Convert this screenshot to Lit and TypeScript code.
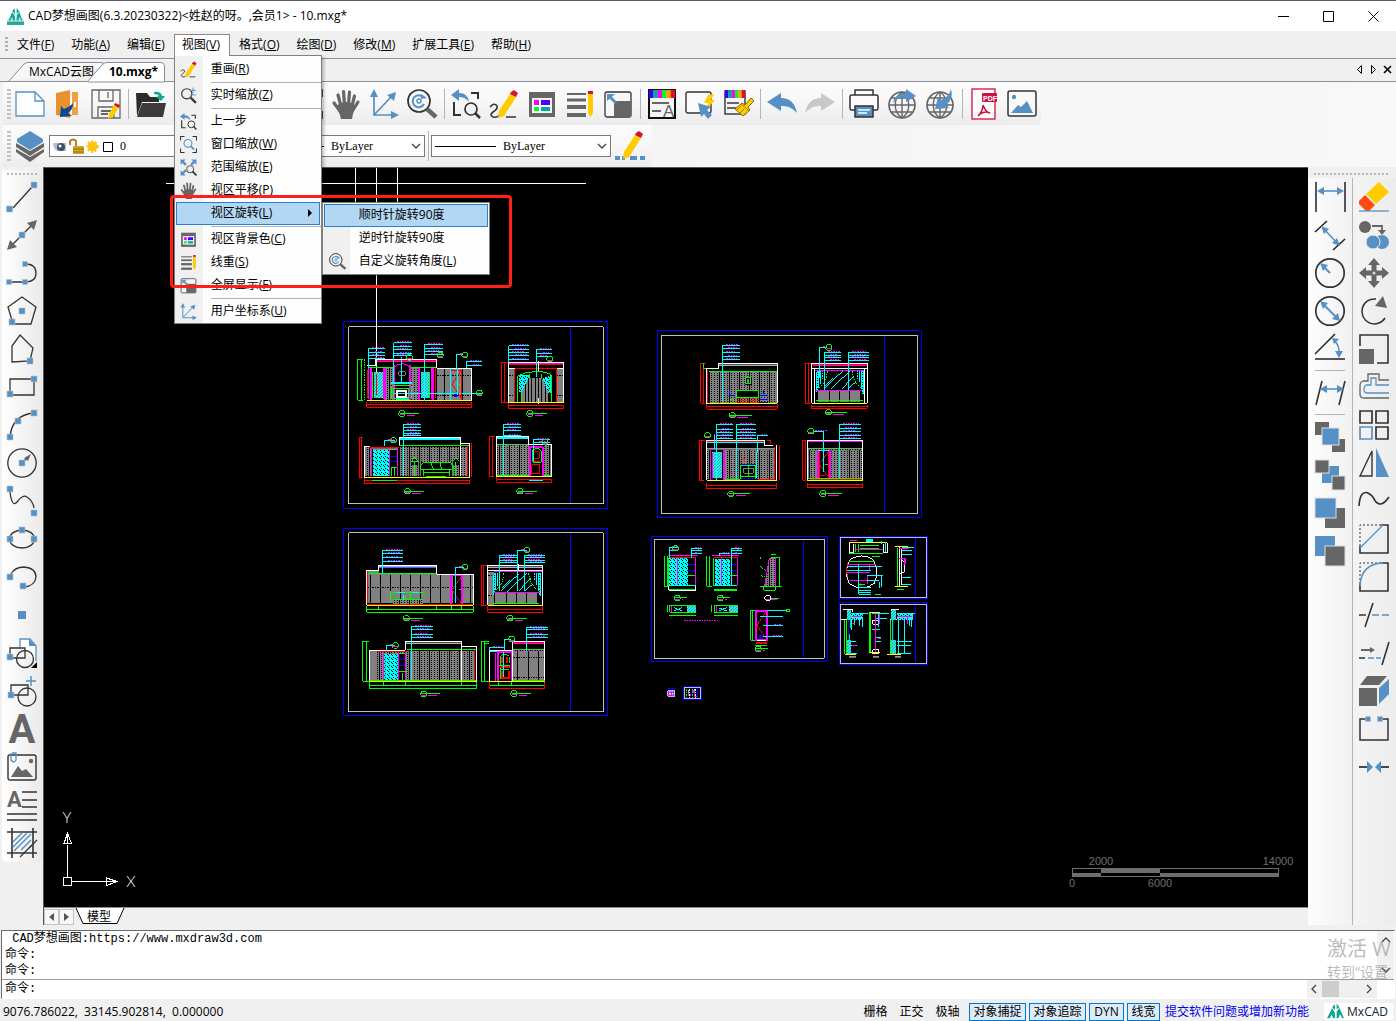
import { LitElement, html, svg, css } from "lit";
import { customElement } from "lit/decorators.js";

/* ---------- icons: every glyph lives on a 30 x 30 grid ---------- */

const B = "#5690c4";
const D = "#333333";
const G = "#666666";
const Y = "#ffcc00";

const ln = (d: string, c = D, w = 1.3) => svg`<path d=${d} fill="none" stroke=${c} stroke-width=${w}/>`;
const fl = (d: string, c = B) => svg`<path d=${d} fill=${c}/>`;
const dot = (x: number, y: number, s = 6) =>
  svg`<rect x=${x - s / 2} y=${y - s / 2} width=${s} height=${s} fill=${B} stroke="#b5c4d3" stroke-width="0.6"/>`;
const circ = (x: number, y: number, r: number, c = D, w = 1.3) =>
  svg`<circle cx=${x} cy=${y} r=${r} fill="none" stroke=${c} stroke-width=${w}/>`;
const rainbow = (w: number) =>
  ["#3a00ff", "#00a99d", "#ff00ff", "#00ff20", "#ff9900", "#d4142a"].map(
    (c, i) => svg`<rect x=${2 + (i * w) / 6} y="1" width=${w / 6 + 0.2} height="8" fill=${c}/>`
  );
const globe = svg`${circ(15, 16, 13, G, 1.7)}${ln("M15 3V29M2 16H28M4.500 9H25.500M4.500 23H25.500M15 3C6 9 6 23 15 29M15 3C24 9 24 23 15 29", G, 1.4)}`;
const pencil = svg`${fl("M21 5L27 8L15 27L9 29L10 22Z", Y)}${fl("M22 3L25 1L29 4L27 8L21 5Z", "#d4142a")}`;

const ICONS: Record<string, unknown> = {
  file: svg`<path d="M1 3H20L29 12V27H1Z" fill="#fbfdff" stroke=${B} stroke-width="1.300"/>${ln("M20 3V12H29", B)}`,
  open: svg`${fl("M3 4L17 1V29L3 26Z", "#e8912d")}${fl("M19 3H25V26H19Z", "#f0a045")}${ln("M22 13V18", "#ffffff", 2)}${fl("M7 28L8 17L11 20Q18 17 20 14Q20 21 15 24L19 27Z", "#0b4a92")}`,
  save: svg`${ln("M1 1H29V29H1Z", G)}${ln("M8 1V12H22V1M17 3V9M7 29V18H23V29", G)}${ln("M10 22H20M10 25H17", G, 1.8)}${fl("M23 16L28 18L22 28L17 30L18 25Z", Y)}${fl("M24 14L29 16L28 19L23 16Z", "#d4142a")}`,
  folder: svg`${fl("M1 4H12L15 8H24V13H7L2 27Z", "#2b2b2b")}${fl("M7 14H31L28 28H2Z", "#3b3b3b")}${fl("M19 3Q26 2 27 7L30 7L26 12L21 8L24 7Q23 5 19 5Z", "#16a596")}`,
  zoomrt: svg`${circ(12, 12, 9, D, 2)}${ln("M19 19L28 28", D, 4)}${ln("M18 6H28M23 1V11M18 14H28", B, 1.6)}`,
  zoomwin: svg`${ln("M1 8V1H8M22 1H29V8M29 22V29H22M8 29H1V22", D, 1.8)}${circ(14, 13, 7, B, 1.8)}${ln("M19 18L25 24", B, 3)}`,
  zoomext: svg`${fl("M1 1H10L7 4L12 9L9 12L4 7L1 10ZM29 1V10L26 7L21 12L18 9L23 4L20 1ZM1 29V20L4 23L9 18L12 21L7 26L10 29Z")}${circ(18, 18, 6, G, 2)}${ln("M22 22L29 29", D, 3)}`,
  hand: svg`<path d="M10 17L7 6M13.500 15L12.500 2.500M17.500 15L18.500 3M21 17L23.500 7M9 22L3 14M22 21L27 13" fill="none" stroke=${G} stroke-width="3.200" stroke-linecap="round"/>${fl("M8 15Q15 11 23 15L24 19L22 25L21 30H10L9 26L5 18Z", G)}`,
  axes: svg`${ln("M5 5V26H25M5 26L22 8", B, 1.7)}${fl("M5 0L9 8H1ZM30 26L22 22V30ZM27 3L25 12L18 6Z")}`,
  rotate: svg`${circ(12, 12, 11, D, 1.7)}${ln("M16 8A6 6 0 1 0 17 15", B, 2)}${circ(12, 12, 2, B, 1.5)}${ln("M20 20L29 28", G, 4.5)}${fl("M14 5L20 9L14 10Z")}`,
  prev: svg`${ln("M3 13V26H10M20 4H27V10", D, 2)}${circ(20, 20, 6, D, 1.7)}${ln("M24 24L29 29", D, 2.5)}${fl("M0 6L8 0V4Q17 4 18 13Q14 8 8 8V12Z")}`,
  redraw: svg`${ln("M1 18Q5 13 8 17Q9 20 4 23Q0 26 4 28Q8 29 11 26M17 28H27", D, 1.6)}${pencil}`,
  colors: svg`<rect x="2" y="3" width="26" height="25" fill=${G}/><rect x="5" y="9" width="20" height="15" fill="#f5f5f5"/><rect x="7" y="11" width="5" height="5" fill="#ff00ff"/><rect x="14" y="11" width="9" height="5" fill="#4b00ff"/><rect x="7" y="18" width="5" height="4" fill="#00ff20"/><rect x="14" y="18" width="9" height="4" fill="#00a99d"/>`,
  lines: svg`${ln("M2 5H21", G, 2)}${ln("M2 11H21", G, 3)}${ln("M2 18H21", G, 4)}${ln("M2 26H21", G, 4)}${fl("M23 5H28V24L25.500 28L23 24Z", Y)}${fl("M23 2H28V5H23Z", "#d4142a")}`,
  full: svg`<rect x="2" y="3" width="26" height="25" rx="2" fill="#f7f7f7" stroke=${D} stroke-width="1.300"/>${fl("M11 12H28V28H11Z", G)}${ln("M5 6L13 14", B, 3)}${fl("M4 5H12L4 12Z")}`,
  ltype: svg`<rect x="2" y="1" width="26" height="28" fill="#f5f5f5" stroke="#111" stroke-width="2"/>${rainbow(26)}${ln("M5 14H22M5 22H14", G, 2)}<text x="16" y="28" font-family="Liberation Sans" font-size="17" fill=${G}>A</text>`,
  select: svg`<rect x="1" y="3" width="25" height="21" rx="2" fill="#fafafa" stroke=${D} stroke-width="1.400"/>${fl("M23 6L29 5L26 11H30L21 21L23 14H19Z", Y)}${fl("M13 14L26 18L22 21L27 26L23 30L19 25L16 28Z")}`,
  brush: svg`<rect x="2" y="2" width="20" height="23" fill="#f5f5f5" stroke="#222" stroke-width="1.300"/>${rainbow(20)}${ln("M4 14H16M4 19H14", G, 1.8)}<path d="M28 9L31 12L25 18L27 21L20 27L12 20L19 14L22 16Z" fill=${Y} stroke="#8a6800"/>${ln("M18 15L26 22M14 21L18 17M17 24L21 20", "#8a6800", 0.8)}`,
  undo: svg`${fl("M0 13L14 4V9Q27 9 30 24Q23 16 14 17V22Z")}`,
  redo: svg`${fl("M30 13L16 4V9Q3 9 0 24Q7 16 16 17V22Z", "#c8c8c8")}`,
  print: svg`<rect x="6" y="1" width="18" height="6" fill="#fafafa" stroke=${D} stroke-width="1.500"/><rect x="1" y="6" width="28" height="15" rx="1.500" fill="#fafafa" stroke=${D} stroke-width="1.500"/><rect x="6" y="17" width="18" height="11" fill=${B} stroke=${D} stroke-width="1.500"/>${ln("M9 21H21M9 24H18", "#ffffff")}`,
  globeout: svg`${globe}${fl("M6 14Q8 4 19 4V0L29 7L19 13V9Q11 8 6 14Z")}`,
  globein: svg`${globe}${fl("M26 0Q29 10 21 16L24 19L10 20L13 8L16 11Q24 8 26 0Z")}`,
  pdf: svg`<rect x="3" y="0" width="23" height="30" fill="#fff" stroke="#d0103f" stroke-width="1.300"/><rect x="13" y="4" width="15" height="9" rx="1" fill="#d0103f"/><text x="14" y="11.500" font-family="Liberation Sans" font-weight="bold" font-size="7" fill="#fff">PDF</text>${ln("M9 27Q14 22 14 16Q17 24 21 24Q15 21 9 27", "#d0103f", 1.5)}`,
  image: svg`<rect x="1" y="2" width="28" height="25" rx="2" fill="#f8f8f8" stroke=${D} stroke-width="1.500"/>${fl("M4 24L11 16L14 18L20 12L26 24Z")}<circle cx="7" cy="8" r="2.200" fill=${B}/>`,
  layers: svg`${fl("M15 20L1 12V16L15 25L29 16V12Z", G)}${fl("M15 26L1 18V21L15 31L29 21V18Z", G)}${fl("M15 0L28 8V11L15 19L2 11V8Z")}`,
  edit: svg`${fl("M0 25H5V29H0ZM7 25H10V29H7ZM15 25H22V29H15ZM25 25H30V29H25Z")}<g transform="translate(-1 -1)">${pencil}</g>`,

  line: svg`${ln("M6 26L25 5")}${dot(2.500, 27)}${dot(27, 3)}`,
  xline: svg`${ln("M6 24L24 6")}${fl("M30 0L27 10L20 3ZM0 30L3 20L10 27Z", G)}${dot(15, 15)}`,
  pline: svg`${ln("M3 24H18Q29 24 29 15Q29 6 18 6")}${dot(2, 24, 5)}${dot(18, 24, 5)}${dot(18, 6, 5)}`,
  polygon: svg`${ln("M15 1L29 11L24 28H6L1 11Z")}${dot(15, 15)}${dot(5, 26)}`,
  poly: svg`${ln("M13 1L26 14L23 27L5 28V12Z")}${dot(23, 27)}`,
  rect: svg`${ln("M3 7H27V23H3Z")}${dot(27, 7)}${dot(3, 22)}`,
  arc: svg`${ln("M3 27Q5 5 27 3", D, 1.4)}${dot(3, 27)}${dot(11, 11)}${dot(27, 3)}`,
  circle: svg`${circ(15, 15, 14.200)}${ln("M15 15L21 9")}${fl("M24 6L21 13L17 10Z", G)}${dot(15, 15)}`,
  spline: svg`${ln("M3 6Q5 22 10 16Q16 8 20 11Q26 15 27 22")}${dot(3, 3)}${dot(27, 27)}`,
  ellipse: svg`<ellipse cx="15" cy="15" rx="12.500" ry="9" fill="none" stroke=${D} stroke-width="1.300"/>${dot(15, 6)}${dot(3, 15)}${dot(27, 15)}`,
  earc: svg`${ln("M4 12Q8 5 17 5Q29 6 29 15Q28 24 17 25")}${dot(3, 15)}${dot(16, 24)}`,
  point: svg`<rect x="11" y="11" width="8" height="8" fill=${B}/>`,
  block: svg`<path d="M13 9V1H23L29 8V23" fill="#fff" stroke=${B} stroke-width="1.300"/>${fl("M22 1L29 8H22Z")}${ln("M3 10H18V20H3Z")}${circ(18, 21, 8.500)}${dot(3, 19)}${fl("M30 24V30H24Z", "#000")}`,
  blockadd: svg`${ln("M4 9H21V19H4Z")}${circ(20, 21, 9)}${ln("M24 0V10M19 5H29", B, 1.5)}${dot(4, 19)}`,
  text: svg`<text x="15" y="29" text-anchor="middle" font-family="Roboto, sans-serif" font-weight="bold" font-size="40" fill=${G}>A</text>`,
  picture: svg`<rect x="1" y="3" width="28" height="25" rx="2" fill="none" stroke=${D} stroke-width="1.400"/>${fl("M4 25L11 14L15 19L19 17L26 25Z", G)}<circle cx="24" cy="9" r="2.200" fill=${G}/>${ln("M4 1V8Q7 12 9 8V1H5", B)}`,
  mtext: svg`<text x="0" y="17" font-family="Roboto, sans-serif" font-weight="bold" font-size="22" fill=${G}>A</text>${ln("M15 2H30M15 10H30M15 17H30M0 24H30M0 30H30", D, 1.5)}`,
  hatch: svg`${ln("M5 0V30M26 0V30M0 4H30M0 25H30", D, 1.6)}${ln("M6 14L15 5M6 19L20 5M7 23L24 6M14 22L24 12M22 20L25 17", B, 1.5)}${ln("M13 29L30 12")}`,

  dimlin: svg`${ln("M1 0V30M30 0V30", "#222", 1.5)}${ln("M5 9H25", B, 1.6)}${fl("M2 9L9 5V13ZM29 9L22 5V13Z")}`,
  dimal: svg`${ln("M0 12L12 1M18 30L30 19", "#222", 1.5)}${ln("M9 9L22 23", B, 1.6)}${fl("M6 6L14 9L9 14ZM25 26L17 23L22 18Z")}`,
  dimrad: svg`${circ(15, 15, 14.200, D, 1.7)}${ln("M8 8L15 15", B, 2)}${fl("M5 5L13 7L8 13Z")}`,
  dimdia: svg`${circ(15, 15, 14.200, D, 1.7)}${ln("M8 8L22 22", B, 2)}${fl("M5 5L13 7L8 13ZM25 25L17 23L23 17Z")}`,
  dimang: svg`${ln("M0 20L20 0M0 25H30", "#222", 1.5)}${ln("M19 6Q25 12 24 20", B, 1.5)}${fl("M17 4L24 5L19 10ZM24 24L20 17L28 17Z")}`,
  dimcont: svg`${ln("M1 27L7 3M24 27L30 3", D, 1.6)}${ln("M8 11H26", B, 1.6)}${fl("M5 11L12 7V15ZM29 11L22 7V15Z")}`,
  front: svg`${fl("M0 0H14V13H0ZM17 17H30V30H17Z", G)}<rect x="7" y="6" width="17" height="17" fill=${B} stroke="#ddd"/>`,
  back: svg`${fl("M7 6H24V23H7Z")}<rect x="0" y="0" width="14" height="13" fill=${G} stroke="#ddd"/><rect x="17" y="16" width="13" height="14" fill=${G} stroke="#ddd"/>`,
  above: svg`${fl("M10 10H30V30H10Z", G)}<rect x="0" y="0" width="21" height="20" fill=${B} stroke="#ddd"/>`,
  below: svg`${fl("M0 0H20V20H0Z")}<rect x="10" y="10" width="20" height="20" fill=${G} stroke="#ddd"/>`,

  erase: svg`${fl("M20 0L30 10L17 22L7 12Z", Y)}${fl("M6 13L16 23L10 29H7L0 22V19Z", "#ff4a10")}${ln("M0 29H30", B)}`,
  copy: svg`<circle cx="6" cy="7" r="6" fill=${G}/>${ln("M13 6H23V11", G, 1.8)}${fl("M19 10H27L23 15Z", G)}<circle cx="23" cy="22" r="7" fill=${B}/><circle cx="14" cy="22" r="7" fill=${B} stroke="#eee"/>`,
  move: svg`${ln("M15 5V25M5 15H25", G, 5)}${fl("M15 0L21 7H9ZM15 30L21 23H9ZM0 15L7 9V21ZM30 15L23 9V21Z", G)}<circle cx="15" cy="15" r="1.500" fill="#ddd"/>`,
  rot: svg`${ln("M17 3A12.500 12.500 0 1 0 26 22", D, 1.5)}${fl("M24 0L28 12L16 10Z", G)}`,
  scale: svg`${ln("M1 12V1H29V29H18", D, 1.6)}${fl("M0 15H15V30H0Z", G)}`,
  offset: svg`${ln("M30 8H20V2H9V9H4Q1 10 1 14V22Q1 26 5 26H30", G)}${ln("M30 13H17V6H12V13H7Q5 14 5 17Q5 21 8 21H30", B)}`,
  array: svg`${ln("M1 1H13V13H1ZM17 1H29V13H17ZM17 17H29V29H17Z", D, 1.7)}${ln("M1 17H13V29H1Z", B, 1.7)}`,
  mirror: svg`${ln("M13 3V28H1Z", D, 1.4)}${fl("M17 0V29H30Z")}`,
  curve: svg`${ln("M0 20Q1 4 9 7Q14 10 15 13Q21 24 30 11", D, 1.6)}`,
  chamfer: svg`<path d="M1 22V1H22" fill="none" stroke=${D} stroke-dasharray="2 2"/>${ln("M22 1H29V29H1V22", D, 1.6)}${ln("M1 24L24 1", B)}`,
  fillet: svg`<path d="M1 22V1H22" fill="none" stroke=${D} stroke-dasharray="2 2"/>${ln("M22 1H29V29H1V22", D, 1.6)}${ln("M1 24Q2 2 24 1", B, 1.6)}`,
  trim: svg`${ln("M0 15H7M6 27L14 3", D, 1.6)}${ln("M13 15H20M23 15H30", B, 1.6)}`,
  extend: svg`${ln("M0 20H6M23 27L30 4", D, 1.6)}${ln("M9 20H15M17 20H22", B, 1.6)}${ln("M2 12H12", G, 2)}${fl("M16 12L11 9V15Z", G)}`,
  solid: svg`${fl("M8 0H28L20 9H1ZM0 12H18V30H0Z", G)}${fl("M20 12L30 3V18L20 28Z")}`,
  brk: svg`${ln("M8 5H1V26H29V5H22", D, 1.5)}${dot(9, 5, 5)}${dot(21, 5, 5)}`,
  join: svg`${ln("M0 15H10M20 15H30", "#111", 1.6)}${fl("M8 9L14 15L8 21ZM22 9L16 15L22 21Z")}`,
  logo: svg`${fl("M0 27L9 9L14 17V27H11L8 20L5 27ZM30 27L22 9L17 15V27H20L23 20L27 27ZM9 7L14 2V13ZM22 8L17 1V11Z", "#12a596")}`,
  app: svg`${fl("M2 18H28L30 24V30H0V24Z", "#bfe3df")}${fl("M0 24H30V30H0Z", "#2aa79b")}${fl("M3 22L9 7L14 14V22H11L9 16L6 22ZM27 22L22 7L17 13V22H20L22 16L25 22ZM9 5L14 1V11ZM22 6L17 0V10Z", "#12a596")}`,
};

const icon = (name: string, size = "i30") =>
  html`<svg class=${size} viewBox="0 0 30 30" aria-hidden="true">${ICONS[name]}</svg>`;

/* ---------- drawing sheets: each unit is a third of a screen pixel ---------- */

type Item = [string, string];
const INK: Record<string, string> = {
  c: "#00ffff", m: "#ff00ff", g: "#00ff00", r: "#ff0000", w: "#ffffff",
  y: "#ffff00", b: "#0000ff", s: "#c0c0c0", k: "#808080", x: "#000000",
};
const R = (x: number, y: number, w: number, h: number) => `M${x} ${y}h${w}v${h}h${-w}z`;
/* leader with note lines */
const N = (x: number, ys: number[], x2: number, end: number): Item[] => [
  ["c", `M${x} ${end}V${ys[0]}` + ys.map((y) => `M${x} ${y}H${x2}`).join("")],
  ["m.", ys.map((y, i) => `M${x + 10 + (i % 2) * 8} ${y - 3}H${x2 - 4 - (i % 3) * 5}`).join("")],
];
const O = (x: number, y: number, c = "g"): Item[] => [
  [c, `M${x - 5} ${y - 8}h10l4 5v6l-4 5h-10l-4 -5v-6z`],
  ["m", `M${x - 7} ${y + 4}H${x + 7}`],
];
/* view title: bubble with a double line */
const T = (x: number, y: number, w = 50): Item[] => [
  ...O(x, y), ["g", `M${x - 7} ${y}H${x + w}`], ["m", `M${x + 14} ${y + 6}H${x + w - 10}`],
];
const frame = (x: number, y: number, w: number, h: number, p: number, q: number, v: number): Item[] => [
  ["b", R(x, y, w, h)], ["s", R(x + p, y + q, w - 2 * p + 2, h - 2 * q + 2)], ["b", `M${v} ${y + q + 2}V${y + h - q}`],
];
const windowView = (x: number, y: number): Item[] => [
  ["c", `M${x + 15} ${y + 30}v60M${x + 21} ${y + 24}v52M${x + 27} ${y + 24}v40M${x + 144} ${y + 24}v36M${x + 150} ${y + 24}v56M${x + 156} ${y + 24}v70`],
  ["c.", `M${x + 18} ${y + 26}v60M${x + 33} ${y + 24}v26M${x + 138} ${y + 24}v26M${x + 153} ${y + 24}v70`],
  ["g.", `M${x + 46} ${y + 26}Q${x + 44} ${y + 60} ${x + 20} ${y + 78}M${x + 120} ${y + 26}Q${x + 124} ${y + 60} ${x + 150} ${y + 78}`],
  ["c1", `M${x + 36} ${y + 80}l56 -54M${x + 56} ${y + 80}l60 -56M${x + 90} ${y + 80}l36 -40M${x + 40} ${y + 70}l24 -24M${x + 110} ${y + 78}l22 -20`],
  ["k#", R(x + 18, y + 86, 126, 32)],
  ["x", `M${x + 54} ${y + 86}v32M${x + 84} ${y + 86}v32M${x + 114} ${y + 86}v32`],
  ["g", `M${x + 12} ${y + 84}h138M${x + 12} ${y + 116}h140`],
];
const doorCross = (x: number, y: number, w: number, h: number): Item[] => [
  ["r1", `M${x + w} ${y}L${x} ${y + h / 2}L${x + w} ${y + h}`], ["g", `M${x + w - 8} ${y + h / 2}h7`],
];

const SHEET_A: Item[] = [
  ...frame(11, 20, 792, 560, 15, 15, 691),
  ["w", "M109 0V180"],
  ["brick", R(134, 158, 30, 96)], ["brick", R(212, 158, 26, 96)],
  ["k#", R(291, 162, 104, 92)], ["x.", "M290 181H395M290 241H395"], ["x", "M314 162V254M368 162V254"],
  ["hatch", R(101, 172, 27, 76)], ["hatch", R(243, 172, 27, 76)],
  ["r", "M109 176V240M82 165V250M112 137H288M286 160V250"],
  ["m", "M110 140H288M131 160V252M86 160V252M276 160V252"],
  ["m5", "M94 160V254M136 160V254M163 150V254M211 150V254M237 160V254M280 160V254"],
  ["m", "M162 158Q170 146 187 146Q204 146 210 158M162 212H212"],
  ["g", "M86 157H160M212 157H290M99 172V248M270 172V248M156 214V252M216 214V252M158 212H212"],
  ["k", R(176, 170, 20, 11)], ["k", "M186 140V200"],
  ["c", "M154 202H215M154 206H215M160 236H430M184 127V205M168 248H206"],
  ["w5", R(170, 228, 27, 18)], ["c#", R(167, 248, 40, 6)], ["g", R(160, 222, 46, 30)],
  ["w", "M80 151H107V133H290V160H395V256"],
  ...doorCross(336, 166, 28, 84), ["r", "M364 166V254M334 166H364"], ["c", "M333 162V254M352 160V240"], ["b#", R(342, 238, 10, 7)],
  ["y", "M80 256H395"], ["r", "M80 268H395M80 277H395M80 262V277M395 262V277"], ["r.", "M90 262H395"],
  ["g", "M53 133H68M53 256H68M53 133V256M65 133V256"], ["g.", "M73 133V256"],
  ...N(86, [100, 112, 121, 130], 135, 160), ...N(161, [83, 94, 103, 115, 121], 217, 200), ...N(254, [88, 100, 110, 118], 310, 258),
  ...N(350, [118], 370, 160), ...N(380, [139, 151], 426, 160),
  ...O(301, 120), ...O(375, 120), ...O(209, 128), ...O(418, 234), ...T(186, 296),

  ["k#", R(507, 163, 164, 98)], ["x#", R(524, 163, 126, 98)], ["x.", "M507 181H671M507 241H671"],
  ["k#", "M545 261V215L568 188H605L625 215V261Z"], ["x", "M556 205V261M566 192V261M576 188V261M586 188V261M596 188V261M606 192V261M616 205V261"],
  ["cdot", "M537 182L570 178L545 232H537ZM608 190L635 180V235H625Z"],
  ["g", "M534 261V182Q560 168 592 170Q625 170 635 182V261M545 261V230M568 188V176M605 176V188"],
  ["m", "M506 145H668"], ["r", "M506 148H668M524 162V261M650 162V261M524 162H650M484 143V262M493 143V262M484 143H505M484 262H505M505 271H671V280H505V264"],
  ["w", "M506 262V143H671V262M506 160H524M650 160H671M596 138V168M596 248V268"], ["y", "M505 262H671"],
  ...N(506, [92, 103, 112, 121, 133], 568, 145), ...N(590, [103, 115, 124], 637, 186), ...O(630, 132), ...T(570, 296),

  ["brick", R(76, 395, 20, 88)], ["brick", R(176, 395, 208, 88)], ["cdot", R(98, 404, 52, 80)],
  ["m", "M92 400H172V484M150 402V484M96 398V484"], ["b", "M153 424H170M153 439H170"], ["g", "M98 404H170M155 458V484M165 458V484M152 458H172"],
  ["x#", R(212, 432, 22, 18)], ["x#", R(338, 432, 20, 18)], ["x#", R(244, 442, 92, 44)],
  ["g", "M215 440L222 428L232 434V440ZM224 440V484M348 440V484M340 438L348 430L356 438M242 464H338M250 464V484M328 464V484M243 462V450L250 442H330L337 450V462M272 442L280 462M300 442L304 462M250 472H328M258 484H318"],
  ["r", "M58 367V487H70M66 367V487M58 367H70M90 397H176M73 496H389V506H73V488M394 384V487M383 392V484"],
  ["w", "M73 487V394H90M178 394V367H361V386H389V487M361 386V484"], ["c", "M180 370H360M180 373H360"], ["g", "M176 391H386M96 496H170"],
  ["y", "M73 487H389"], ...N(191, [328, 337, 346, 355, 361], 242, 484), ...N(134, [376], 165, 394), ...O(161, 376), ...T(203, 529),

  ["brick", R(470, 390, 96, 92)], ["brick", R(612, 390, 22, 92)], ["m5", "M570 396V484M608 396V484M568 396H610"], ["m.", "M470 391H566"],
  ["g", "M470 389H566M470 482H566M578 404V442H604V408L596 402H586ZM612 482H635"], ["r", "M576 449H600V476H576ZM582 410H598V430H582ZM576 440H600M448 364V485H462M457 364V485M448 364H466M470 493H635V502H470V487"],
  ["w", "M469 484V364H566V390H635V484"], ["c", "M470 368H565M470 371H565M568 496H608"], ["y", "M469 485H635"],
  ...N(490, [328, 337, 346, 361], 542, 487), ...N(580, [373, 382], 630, 440), ...O(615, 381), ...T(540, 529),
];

const SHEET_B: Item[] = [
  ...frame(11, 26, 792, 560, 15, 12, 691),
  ["k#", "M80 163V154H116V163H290H400V250H80Z"], ["x#", R(116, 138, 174, 22)],
  ["x", "M92 166V250M122 166V250M152 166V250M182 166V250M212 166V250M242 166V250M272 166V250M302 166V250M392 166V250"], ["x.", "M80 203H400"],
  ["brick", R(158, 238, 92, 16)], ["x#", R(338, 166, 26, 86)],
  ["g", "M84 160H288M152 214V250M211 214V250M155 217H256M158 240H250M196 228V240"], ["c", "M118 139H288M172 217H194M215 217H236M190 224V240"],
  ["m", "M118 142H288"], ["m5", "M333 166V254M366 166V254M330 166H368"], ...doorCross(336, 170, 28, 80), ["b#", R(342, 236, 10, 8)],
  ["r", "M80 253H400M82 154V250"], ["w", "M80 254V151H116V136H290V163H400V256"], ["y", "M80 256H400"],
  ["g", "M80 268H400M80 277H400M80 258V277M400 258V277M116 258V268M290 258V268M334 258V268M366 258V268"],
  ...N(127, [91, 100, 112, 124], 190, 162), ...N(346, [142], 372, 248), ...O(375, 141), ...T(199, 295),

  ["k#", R(444, 156, 18, 98)], ["x.", "M444 166H460M444 226H460"], ...windowView(446, 134),
  ["r", "M444 139H606M424 136V256H442M432 136V256M424 136H442M443 259V277H608V259M443 268H608"], ["c", "M444 142H606"], ["m", "M462 156H606M462 217H600"],
  ["w", "M443 256V136H608V256M443 151H608M536 132V152"], ["y", "M443 256H608"],
  ...N(478, [106, 112, 121, 127], 530, 214), ...N(553, [106, 112, 121, 127], 614, 214), ...N(533, [91], 560, 214), ...O(561, 90), ...T(510, 295),

  ["k#", R(90, 393, 20, 90)], ["brick", R(110, 393, 294, 88)], ["cdot", R(131, 402, 44, 80)], ["x#", R(177, 400, 20, 82)],
  ["m", "M130 396V482M175 396V482M197 396V482M200 390H408"], ["r", "M112 396H200M198 368H362M405 386V482"], ["c", "M198 371H362"],
  ["b", "M178 418H196M178 436H196"], ["g", "M178 400H196M188 458V482M178 456H200M200 389H408M90 482H408"],
  ["w", "M88 484V391H196V364H365V484M365 379H410V484"], ["y", "M88 484H410"],
  ["g", "M88 496H410M88 505H410M88 486V505M410 486V505M130 486V496M196 486V496M365 486V496M68 364V484M80 364V484M68 364H86M68 484H86"],
  ...N(214, [319, 330, 343, 352], 278, 480), ...N(140, [376], 164, 394), ...O(166, 377), ...T(251, 522),

  ["k#", R(518, 392, 96, 90)], ["x.", "M518 412H614M518 472H614"], ["x", "M534 392V482M565 392V482M595 392V482"],
  ["m5", "M475 396V482M515 396V482M472 396H516"], ["m.", "M520 391H612"], ["m", "M467 398V482M518 370H612"],
  ["g", "M482 476V410L488 403H500L508 410V430M478 436H510M482 450H508"], ["r5", "M486 452V474H506V452M486 410V430M502 410V430M480 440H510"], ["c", "M492 396V470M450 392V482M450 396H470"],
  ["r", "M518 367H612M448 486V505H614V486"], ["w", "M448 484V391H517V364H614V484M517 391V484"], ["g", "M424 364V484M434 364V484M424 364H446M434 370H446M424 484H446M518 388H612M518 482H614M450 496H612M475 486V496M516 486V496"], ["y", "M448 484H614"],
  ...N(560, [322, 330, 343, 352], 623, 392), ...N(493, [358], 512, 390), ...N(450, [382], 492, 394), ...O(515, 357), ...T(522, 521),
];

const SHEET_C: Item[] = [
  ...frame(22, 17, 792, 560, 12, 14, 703),
  ["brick", R(176, 140, 206, 94)],
  ["x#", R(258, 196, 70, 22)], ["x#", R(285, 155, 20, 26)], ["g", `${R(286, 157, 16, 20)}${R(259, 197, 67, 20)}`], ["k#", R(290, 162, 8, 14)],
  ["r.", "M262 222H326M262 228H326M262 233H326"], ["b", "M238 212H256M330 212H354M240 206V196M342 206V196M330 224H354M330 232H354"], ["g.", "M240 224H256M240 232H256"],
  ["r", "M208 118H382M174 136V234M152 115V235H166M160 115V235M152 115H168M170 244H382M170 253H382M170 238V253M382 238V253"],
  ["c", "M206 121H382"], ["g", "M160 130V115M160 130H168M178 139H380"], ["w", "M169 238V130H206V115H382V234"], ["y", "M172 235H382"],
  ...N(217, [61, 70, 82, 94, 103], 269, 232), ...T(247, 271, 58),

  ...windowView(486, 112), ["r", "M486 118H652M466 115V235H482M475 115V235M466 115H482M484 240V250H652V240M484 244H652"],
  ["m", "M488 121H650M494 136H645M494 196H636"], ["w", "M485 235V115H652V235M485 130H652M494 130V235M644 130V235"], ["y", "M485 235H652"],
  ...N(523, [82, 91, 97, 106], 574, 194), ...N(595, [82, 91, 97, 106], 656, 194), ...N(508, [67], 530, 160), ...O(537, 68), ...T(536, 262, 56),

  ["brick", R(170, 374, 206, 88)], ["x#", R(181, 376, 44, 86)], ["hatch", R(187, 382, 28, 78)], ["m5", "M222 374V464"], ["m", "M181 376V464M188 384V460M170 374H376"],
  ["x#", R(268, 418, 54, 46)], ["k", R(282, 430, 28, 15)], ["b", "M270 420H322M270 462H322"], ["g", "M272 420V462M318 420V462M296 420V456M272 456H318M272 422H318"], ["r.", "M270 412L282 400L284 416"],
  ["r", "M170 349H343M148 346V466H162M156 346V466M148 346H164M170 483H380M170 492H380M170 474V492M380 474V492M374 366V462M388 360V466M352 346H362V358M325 463H376"],
  ["c", "M170 352H343M320 380V460"], ["m.", "M170 371H376"], ["g", "M170 370H376M226 463H270"], ["w", "M169 466V346H343V361H370M380 361V466"], ["y", "M170 466H380"],
  ...N(199, [300, 313, 322, 331, 340], 250, 464), ...N(259, [300, 313, 322, 331, 340], 318, 462), ...N(322, [331], 354, 380), ...N(193, [331], 194, 372), ...O(173, 331), ...T(243, 507, 56),

  ["brick", R(474, 374, 164, 86)], ["x#", R(502, 374, 38, 88)], ["m5", "M505 374V462M539 374V462"], ["r", "M508 378V460M536 378V460M514 452H526"],
  ...doorCross(508, 382, 26, 72), ["c", "M520 320V440M505 376H536"], ["m", "M474 351H636"], ["m.", "M474 373H636"], ["g", "M474 370H638M474 461H638"],
  ["r", "M474 348H636M458 346V466H468M466 346V466M458 346H468M472 474V487H638V474M472 480H638M480 463H638"], ["w", "M472 466V346H638V466"], ["y", "M472 466H638"],
  ...N(568, [298, 310, 319, 331, 340], 632, 458), ...N(520, [319], 490, 376), ...O(483, 319), ...T(519, 506, 58),

  ["b", R(4, 634, 528, 375)], ["s", R(13, 643, 510, 357)], ["b1", "M460 645V998"],
  ["cdot", R(57, 700, 56, 82)], ["m", "M84 700V780M136 700V780M54 692H144"], ["r", "M56 697H138"], ["b", "M114 718H134M114 736H134M240 718H258M240 736H258"],
  ["g", "M43 692V784M52 692V784M43 784H56M57 700V782M110 752H136M57 794H137M170 692V784M179 692V784M170 784H186M192 700V782M240 752H260M192 794H262"], ["g5", "M57 796H137M192 796H262"],
  ["w", "M57 782V796H137V782"], ["c", "M57 782H137M193 782H262"], ["cdot", R(194, 702, 46, 80)], ["m", "M214 700V780M262 700V780M186 692H268"], ["r", "M192 697H264"],
  ...N(58, [667, 676], 84, 700), ...N(125, [670, 676, 685], 156, 700), ...N(208, [685], 240, 692), ...N(244, [670, 676, 685], 275, 780), ...T(82, 819, 28), ...T(211, 819, 30), ...O(76, 670),
  ["g", "M52 840V862M60 840V862M60 842H137M60 862H137M57 871H138M185 840V862M193 840V862M193 842H263M193 862H263M192 871H264"],
  ["hatch", R(110, 842, 27, 20)], ["hatch", R(236, 842, 27, 20)], ["c", "M72 848L96 858M72 858L96 848M206 848L230 858M206 858L230 848"], ["m", "M64 842V862M200 842V862"], ["m.", "M102 886H204"],
  ["brick", "M358 700H376V782H344L352 750Z"], ["m", "M376 697V782M344 782L358 700"], ["g", "M362 688H378M362 697H388V784M342 784V796H376V784M330 784H396"], ["g.", "M332 697V706M330 724L350 738M332 752L350 756"], ...O(354, 819, "w"), ["g", "M362 820H386"], ["m", "M362 823H380"],
  ["m5", R(318, 858, 33, 88)], ...doorCross(321, 862, 26, 78), ["g", "M302 856V946M308 856V946M302 856H316M302 946H316M316 962H352"], ["r5", "M317 954H352"], ["w", "M322 946H348"], ["c", "M352 856H410M330 874H398M346 901H398M330 934H398"], ["m.", "M372 898H396M370 931H396"], ["b#", R(328, 930, 12, 8)], ["g", R(410, 853, 8, 8)], ...T(325, 972, 30),

  ["b", R(568, 634, 264, 187)], ["s", R(571, 637, 258, 181)], ["b1", "M796 638V816"],
  ["y", "M598 653H712M736 664H774M736 784H774"], ["w", "M598 655V684H612V656M700 656V684H712V655M748 666V782M754 672V780M750 700L764 712V740L750 746"], ["g", "M598 685H700M618 658V682M626 658V682M630 661H686M630 670H686"], ["m", "M600 646H620M612 673H700"], ["c#", R(648, 641, 20, 10)], ["c", "M696 648V656M706 650V682"],
  ["w", "M600 704Q634 682 670 704Q690 740 672 776Q636 802 598 776Q580 740 600 704"], ["r", "M594 714Q586 740 594 756M633 774V784"], ["m", "M592 718H678M592 742H660M660 716V736M600 766H660M654 752V778"], ["c", "M592 724H696M592 738H664M626 716V808M652 751H698M652 768H688M626 789H662M626 796H662M626 802H662M626 808H662M690 770V790M696 752V786"], ["g", "M596 710H676M626 780H644M666 694H690M674 808H692M742 668V784M742 793H762"], ["c", "M756 667H792M756 676H786M756 688H786M756 757H782M756 780H782"], ["m", "M748 672H776M764 700V720M768 700V716M748 700H768"],

  ["b", R(568, 832, 264, 187)], ["s", R(571, 838, 258, 178)], ["b1", "M796 841V1012"],
  ["w", "M578 855H610M608 855V862M574 883H604M722 855H748M720 884H740M668 886H686V898H668ZM668 974H686V986H668Z"], ["g", "M584 884V988M590 884V988M598 928V948M658 862V984M662 862V984M722 884V988M728 884V988M602 884V910M598 996H618M670 996H688M736 996H754"],
  ["hatch", "M590 856H602V884H590ZM590 946H602V988H590ZM724 856H737V884H724ZM724 946H737V988H724Z"], ["cdot", "M604 868H640V884H604ZM740 866H790V886H740Z"], ["b", "M596 884V946M730 884V946"],
  ["c", "M604 865H654M606 884V914M614 884V900M630 880V904M638 876V906M604 949H618M604 962H622M604 985H620M666 865H718M678 880H712M666 914H690M678 937H694M674 950H694M686 866V906M740 865H796M746 884V984M764 884V984M740 949H786M740 962H784M740 985H784M786 868V906M778 880V904"],
  ["m", "M676 862V984M606 874H634M606 896H616M742 874H786M772 876V896M690 866V898M606 962H618M684 940H694M598 998H618M670 998H688M736 998H754"], ["y", "M658 862H690M658 982H690M586 988H618M712 988H752"],

  ["b", "M52 1092H78"], ["s", R(53, 1097, 22, 17)], ["m#", R(55, 1099, 18, 13)], ["c.", "M58 1101H72M56 1109H74"], ["w.", "M56 1105H74"],
  ["b", R(101, 1085, 53, 39)], ["s", R(103, 1088, 49, 33)], ["b", "M144 1088V1120"], ["g.", "M110 1092V1118M128 1092V1118"], ["c", "M116 1094V1104M134 1092V1104"], ["m5", "M114 1108L122 1112M128 1098L136 1104M132 1110L140 1116"], ["w.", "M120 1092V1118M136 1092V1118"],
];

const PATTERNS = new Set(["brick", "hatch", "cdot"]);
const drawItem = ([k, d]: Item) => {
  if (PATTERNS.has(k)) return svg`<path d=${d} fill=${`url(#${k})`}/>`;
  const c = INK[k[0]];
  if (k[1] === "#") return svg`<path d=${d} fill=${c}/>`;
  const w = k[1] === "5" ? 6 : 3;
  return svg`<path d=${d} fill="none" stroke=${c} stroke-width=${w} stroke-dasharray=${k[1] === "." ? "6 3 3 3" : "none"}/>`;
};

@customElement("cad-drawing")
export class CadDrawing extends LitElement {
  static styles = css`
    :host { display: block; min-height: 0; overflow: hidden; background: #000; }
    .view { display: block; width: 100%; height: 100%; }
    .label { font: 11px "Liberation Sans", sans-serif; fill: #6e6e6e; }
    .axis { font: 300 15px Lato, "Liberation Sans", sans-serif; fill: #fff; }
  `;
  render() {
    return html`<svg class="view" role="img" aria-label="模型">
      <defs>
        <pattern id="brick" width="30" height="6" patternUnits="userSpaceOnUse">
          <rect width="30" height="6" fill="#808080"/>
          <path d="M3 0h3v3h-3zM12 0h3v3h-3zM21 0h3v3h-3zM27 0h3v6h-3z" fill="#000"/>
        </pattern>
        <pattern id="hatch" width="9" height="9" patternUnits="userSpaceOnUse">
          <rect width="9" height="9" fill="#00ffff"/>
          <path d="M0 6h3v3h-3zM3 3h3v3h-3zM6 0h3v3h-3z" fill="#808080"/>
        </pattern>
        <pattern id="cdot" width="12" height="12" patternUnits="userSpaceOnUse">
          <rect width="12" height="12" fill="#00ffff"/>
          <path d="M3 3h3v3h-3zM9 6h3v3h-3zM0 9h3v3h-3z" fill="#000"/>
        </pattern>
      </defs>
      <g transform="translate(-44 -168)" shape-rendering="crispEdges">
        <path d="M166 183.500H586M355.500 160V215M376.500 160V345M397.500 160V215" stroke="#fff" fill="none"/>
        <g transform="translate(340 315) scale(0.333333)">${SHEET_A.map(drawItem)}</g>
        <g transform="translate(340 520) scale(0.333333)">${SHEET_B.map(drawItem)}</g>
        <g transform="translate(650 325) scale(0.333333)">${SHEET_C.map(drawItem)}</g>
      </g>
      <svg x="0" y="100%" overflow="visible">
        <g fill="none" stroke="#fff" shape-rendering="crispEdges">
          <path d="M19.500 -29.500H27.500V-21.500H19.500ZM23.500 -30V-62M28 -25.500H62"/>
          <path d="M23.500 -74L20 -63.500H27.500ZM23.500 -74V-63M73 -25.500L62.500 -29V-21.500ZM62 -25.500H73"/>
        </g>
        <text class="axis" x="23" y="-84" text-anchor="middle">Y</text>
        <text class="axis" x="87" y="-20" text-anchor="middle">X</text>
      </svg>
      <svg x="100%" y="100%" overflow="visible">
        <g shape-rendering="crispEdges">
          <rect x="-235.500" y="-38.500" width="206" height="8" fill="none" stroke="#6e6e6e"/>
          <path d="M-207 -38h59v4h-59zM-236 -34h29v4h-29zM-148 -34h119v4h-119z" fill="#6e6e6e"/>
        </g>
        <text class="label" x="-207" y="-42" text-anchor="middle">2000</text>
        <text class="label" x="-30" y="-42" text-anchor="middle">14000</text>
        <text class="label" x="-236" y="-20" text-anchor="middle">0</text>
        <text class="label" x="-148" y="-20" text-anchor="middle">6000</text>
      </svg>
    </svg>`;
  }
}

/* ---------- application shell ---------- */

const MENUS = [["文件", "F"], ["功能", "A"], ["编辑", "E"], ["视图", "V"], ["格式", "O"], ["绘图", "D"], ["修改", "M"], ["扩展工具", "E"], ["帮助", "H"]];
const VIEW_MENU: (string[] | null)[] = [
  ["redraw", "重画", "R"], null, ["zoomrt", "实时缩放", "Z"], null, ["prev", "上一步", ""], ["zoomwin", "窗口缩放", "W"],
  ["zoomext", "范围缩放", "E"], ["hand", "视区平移", "P"], ["", "视区旋转", "L", "open"], null,
  ["colors", "视区背景色", "C"], ["lines", "线重", "S"], ["full", "全屏显示", "F"], null, ["axes", "用户坐标系", "U"],
];
const ROTATE_MENU = [["", "顺时针旋转90度", "", "hot"], ["", "逆时针旋转90度", ""], ["rotate", "自定义旋转角度", "L"]];
const MAIN_TOOLS = "file open save | folder zoomrt zoomext prev | zoomwin hand axes rotate | prev redraw colors lines full | ltype select brush | undo redo | print globeout globein | pdf image".split(" ");
const DRAW_TOOLS = "line xline pline polygon poly rect arc circle spline ellipse earc point block blockadd text picture mtext hatch".split(" ");
const DIM_TOOLS = "dimlin dimal dimrad dimdia dimang | dimcont | front back above below".split(" ");
const EDIT_TOOLS = "erase copy move rot scale offset array mirror curve chamfer fillet trim extend solid brk join".split(" ");

const tools = (names: string[]) =>
  names.map((n) => (n === "|" ? html`<i class="sep"></i>` : html`<button class="tool" aria-label=${n}>${icon(n)}</button>`));
const key = (k: string) => (k ? html`(<u>${k}</u>)` : "");
const entry = (e: string[]) => html`<button class="entry ${e[3] ? "hot" : ""}" role="menuitem">
  <span class="gutter">${e[0] ? icon(e[0], "i18") : ""}</span><span class="caption">${e[1]}${key(e[2])}</span>
  ${e[3] === "open" ? html`<svg class="more" viewBox="0 0 4 8"><path d="M0 0L4 4L0 8Z"/></svg>` : ""}
</button>`;
const chevron = (d: string) => html`<svg class="chev" viewBox="0 0 10 10"><path d=${d} fill="none" stroke="#444" stroke-width="1.300"/></svg>`;

@customElement("app-root")
export class AppRoot extends LitElement {
  static styles = css`
    :host { display: block; }
    * { box-sizing: border-box; }
    button, input, select { font: inherit; color: inherit; margin: 0; padding: 0; border: 0; background: none; border-radius: 0; }
    svg { display: block; flex: none; overflow: visible; }
    .app { position: relative; display: flex; flex-direction: column; height: 100vh; overflow: hidden; background: #f0f0f0; color: #000;
      font: 12px/16px "Open Sans", "Noto Sans CJK SC", sans-serif; white-space: nowrap; }
    .i30 { width: 30px; height: 30px; }
    .i18 { width: 17px; height: 17px; }

    .title { display: flex; align-items: center; height: 31px; padding-left: 7px; background: #fff; border-top: 1px solid #5c5960; }
    .title .name { flex: 1; padding-left: 4px; }
    .win { width: 45px; height: 30px; display: grid; place-items: center; }
    .win svg { width: 11px; height: 11px; }

    .menubar { display: flex; align-items: center; gap: 1px; height: 28px; border-bottom: 1px solid #8b8f9c; padding: 0 0 0 5px; }
    .grip { flex: none; width: 3px; height: 16px; background: repeating-linear-gradient(#b0b0b0 0 2px, transparent 2px 4px); }
    .menu { position: relative; display: flex; }
    .menu > .head { height: 22px; padding: 0 8px; }
    .menu.open > .head { background: #fff; border: 1px solid #8a8a8a; border-bottom: 0; padding: 0 9px 0 7px; z-index: 3; position: relative; }
    .pop { position: absolute; z-index: 2; background: linear-gradient(90deg, #f0f0f0 28px, #fdfdfd 28px); border: 1px solid #808080; box-shadow: 2px 2px 3px #0004; }
    .view-menu { top: 21px; left: 0; width: 148px; padding-top: 2px; }
    .view-menu::before { content: ""; position: absolute; top: -1px; left: 0; width: 54px; height: 1px; background: #fff; z-index: 4; }
    .sub-menu { top: 146px; left: 147px; width: 168px; padding: 1px; background: linear-gradient(90deg, #f0f0f0 27px, #fdfdfd 27px); }
    .sub-menu .caption { padding-left: 8px; }
    .entry { position: relative; display: flex; align-items: center; width: 100%; height: 23px; border: 1px solid transparent; text-align: left; }
    .entry.hot { background: #b2d7f3; border-color: #2a80cc; }
    .gutter { width: 26px; display: grid; place-items: center; }
    .caption { flex: 1; padding-left: 9px; }
    .view-menu > .entry.hot { margin: 0 1px; width: 144px; }
    .view-menu > .entry.hot .caption { padding-left: 8px; }
    .more { width: 4px; height: 8px; margin-right: 7px; }
    .rule { height: 1px; margin: 1px 0 1px 36px; background: #b0b0b0; }

    .tabs { position: relative; display: flex; align-items: flex-end; height: 23px; border-bottom: 1px solid #8b8f9c; padding-left: 9px; }
    .tab { position: relative; height: 19px; line-height: 18px; }
    .tab svg { position: absolute; inset: 0; width: 100%; height: 100%; }
    .tab span { position: relative; }
    .tab.one { padding: 0 12px 0 20px; width: 97px; }
    .tab.two { margin-left: -18px; padding: 0 0 0 14px; width: 77px; font-weight: bold; }
    .tabctl { margin-left: auto; display: flex; gap: 5px; padding: 0 4px 7px 0; }
    .tabctl svg { width: 9px; height: 9px; }

    .bars { background: linear-gradient(90deg, #f2f2f2, #f8f8f8); }
    .bar { display: flex; width: max-content; align-items: center; background: linear-gradient(#fbfbfb, #f8f8f8 40%, #ececec); border-radius: 0 4px 4px 0; margin-left: 3px; padding-left: 4px; }
    .bar .grip { height: 30px; width: 4px; background: repeating-linear-gradient(#c2c2c2 0 2px, transparent 2px 4px); }
    .bar.main { height: 43px; }
    .bar.props { height: 42px; padding-right: 3px; }
    .tool { width: 38px; height: 38px; display: grid; place-items: center; flex: none; }
    .sep { flex: none; width: 1px; height: 30px; margin: 0 2px 0 3px; background: #b4b4b4; }
    .combo { display: flex; align-items: center; gap: 1px; height: 22px; background: #fff; border: 1px solid #7a7a7a; padding: 0 3px; font-family: "Liberation Serif", serif; font-size: 12px; }
    .combo select { flex: 1; min-width: 0; appearance: none; padding-left: 6px; outline: 0; }
    .combo svg { width: 15px; height: 15px; }
    .combo .chev { width: 10px; height: 10px; }
    .combo.layer { width: 200px; }
    .combo.layer select { padding-left: 3px; }
    .combo.ltype { width: 166px; margin-left: 4px; }
    .combo.lwt { width: 180px; }
    .stroke { width: 61px; height: 1px; background: #000; }

    .work { flex: 1; display: flex; min-height: 0; }
    .side { flex: none; display: flex; flex-direction: column; align-items: center; padding-top: 3px; }
    .strip { display: flex; flex-direction: column; align-items: center; width: 40px; margin: 0 1px 0 2px; background: linear-gradient(90deg, #fff, #eaeaea); border-radius: 0 0 4px 4px; }
    .side .grip { width: 30px; height: 2px; margin: 3px 0; background: repeating-linear-gradient(90deg, #b8b8b8 0 2px, transparent 2px 4px); }
    .side .sep { width: 30px; height: 1px; margin: 2px 0 3px; }
    .center { flex: 1; min-width: 0; display: flex; flex-direction: column; border-left: 1px solid #555; border-top: 1px solid #555; }
    .center cad-drawing { flex: 1; }
    .right { width: 88px; align-items: stretch; }
    .right .grip { width: 76px; margin: 3px auto; }
    .cols { flex: 1; display: flex; }
    .col { flex: 1; display: flex; flex-direction: column; align-items: center; background: linear-gradient(90deg, #fdfdfd, #f1f1f1); }
    .col + .col { border-left: 1px solid #b4b4b4; background: linear-gradient(90deg, #f4f4f4, #ececec); }
    .sheets { display: flex; align-items: center; height: 18px; border-top: 1px solid #888; }
    .sheets .nav { width: 15px; height: 16px; border: 1px solid #c4c4c4; display: grid; place-items: center; background: #f7f7f7; }
    .sheets .nav svg { width: 5px; height: 8px; fill: #555; }
    .sheets .model { position: relative; width: 50px; height: 17px; line-height: 16px; text-align: center; }
    .sheets .model svg { position: absolute; inset: 0; width: 100%; height: 100%; }
    .sheets .model span { position: relative; }

    .command { position: relative; margin: 5px 1px 2px; border: 1px solid #696969; border-right-color: #fff; border-bottom-color: #fff; background: #fff; font-family: "Liberation Mono", "Noto Sans CJK SC", monospace; }
    .log { display: flex; justify-content: space-between; height: 49px; border-bottom: 1px solid #999; }
    .lines { padding-left: 3px; line-height: 16px; }
    .lines p { margin: 0; white-space: pre; }
    .vscroll { width: 17px; background: #f0f0f0; display: flex; flex-direction: column; align-items: center; justify-content: space-between; padding: 4px 0; }
    .vscroll svg, .hscroll svg { width: 10px; height: 10px; }
    .prompt { display: flex; align-items: center; height: 18px; padding-left: 3px; }
    .prompt input { flex: 1; outline: 0; }
    .hscroll { display: flex; align-items: center; width: 70px; height: 18px; margin-right: 17px; background: #f0f0f0; padding: 0 3px 0 2px; gap: 3px; }
    .hscroll i { width: 17px; height: 16px; background: #cdcdcd; margin-right: auto; }
    .mark { position: absolute; right: 0; bottom: 16px; width: 67px; color: #8c8c8c99; font: 14px/20px "Open Sans", "Noto Sans CJK SC", sans-serif; pointer-events: none; }
    .mark strong { display: block; font-weight: normal; font-size: 20px; line-height: 26px; }

    .status { display: flex; align-items: center; height: 20px; gap: 3px; padding: 1px 3px 0; }
    .coords { flex: 1; white-space: pre; }
    .modes { display: flex; gap: 3px; padding-right: 2px; }
    .toggle { width: 33px; height: 18px; border: 1px solid transparent; text-align: center; }
    .toggle.on { border-color: #0078d7; background: #dcebf7; }
    .toggle.wide { width: 57px; }
    .toggle.dyn { width: 35px; }
    .status a { color: #0000f0; text-decoration: none; padding: 0 12px 0 2px; }
    .brand { display: flex; align-items: center; gap: 3px; background: #fff; height: 17px; padding: 0 5px 0 3px; color: #123; }

    .callout { position: absolute; z-index: 5; left: 170px; top: 195px; width: 342px; height: 93px; border: 3px solid #ff2015; border-radius: 4px; pointer-events: none; }
  `;

  render() {
    return html`<div class="app">
      <header class="title">
        ${icon("app", "i18")}
        <span class="name">CAD梦想画图(6.3.20230322)&lt;姓赵的呀。,会员1&gt; - 10.mxg*</span>
        <button class="win" aria-label="最小化"><svg viewBox="0 0 11 11"><path d="M0 5.500H11" stroke="#000"/></svg></button>
        <button class="win" aria-label="最大化"><svg viewBox="0 0 11 11"><path d="M0.500 0.500H10.500V10.500H0.500Z" stroke="#000" fill="none"/></svg></button>
        <button class="win" aria-label="关闭"><svg viewBox="0 0 11 11"><path d="M0.500 0.500L10.500 10.500M10.500 0.500L0.500 10.500" stroke="#000"/></svg></button>
      </header>

      <nav class="menubar">
        <i class="grip"></i>
        ${MENUS.map(([t, k]) => html`<div class="menu ${k === "V" ? "open" : ""}">
          <button class="head">${t}${key(k)}</button>
          ${k === "V" ? html`<div class="pop view-menu" role="menu">
            ${VIEW_MENU.map((e) => (e ? entry(e) : html`<div class="rule"></div>`))}
            <div class="pop sub-menu" role="menu">${ROTATE_MENU.map(entry)}</div>
          </div>` : ""}
        </div>`)}
      </nav>

      <div class="tabs">
        <button class="tab one"><svg viewBox="0 0 97 19" preserveAspectRatio="none"><path d="M0 19L14 3Q16 0.500 19 0.500H92Q96 0.500 97 4" fill="#f7f7f7" stroke="#8b8f9c"/></svg><span>MxCAD云图</span></button>
        <button class="tab two"><svg viewBox="0 0 77 19" preserveAspectRatio="none"><path d="M0 19L14 3Q16 0.500 19 0.500H73Q76 0.500 76.500 4V20H0" fill="#fff" stroke="#8b8f9c"/></svg><span>10.mxg*</span></button>
        <div class="tabctl">
          <svg viewBox="0 0 9 9"><path d="M6.500 0.500V8.500L2.500 4.500Z" fill="none" stroke="#000"/></svg>
          <svg viewBox="0 0 9 9"><path d="M2.500 0.500V8.500L6.500 4.500Z" fill="none" stroke="#000"/></svg>
          <svg viewBox="0 0 9 9"><path d="M1 1L8 8M8 1L1 8" stroke="#000" stroke-width="1.600"/></svg>
        </div>
      </div>

      <div class="bars">
        <div class="bar main"><i class="grip"></i>${tools(MAIN_TOOLS)}</div>
        <div class="bar props">
          <i class="grip"></i>
          <button class="tool" aria-label="图层">${icon("layers")}</button>
          <div class="combo layer">
            <svg viewBox="0 0 15 15"><path d="M0 4H13V12H4Q0 9 0 4Z" fill="#b9bdc4"/><circle cx="8" cy="8" r="4" fill="#35526e"/><circle cx="7" cy="7" r="1.500" fill="#fff"/></svg>
            <svg viewBox="0 0 15 15"><path d="M1 6V2Q4 -1 7 2V7" fill="none" stroke="#a97b12" stroke-width="1.800"/><path d="M4 7H15V15H4Z" fill="#d8a425"/><path d="M4 10H15M4 13H15" stroke="#8f6912"/></svg>
            <svg viewBox="0 0 15 15"><circle cx="7.500" cy="7.500" r="5.500" fill="none" stroke="#ffb400" stroke-width="1.500" stroke-dasharray="2 2"/><circle cx="7.500" cy="7.500" r="4.800" fill="#ffc20e"/></svg>
            <svg viewBox="0 0 15 15"><path d="M2.500 3.500H11.500V12.500H2.500Z" fill="#fff" stroke="#000"/></svg>
            <select aria-label="图层"><option>0</option></select>${chevron("M1 3L5 7L9 3")}
          </div>
          <i class="sep"></i>
          <div class="combo ltype"><i class="stroke"></i><select aria-label="线型"><option>ByLayer</option></select>${chevron("M1 3L5 7L9 3")}</div>
          <i class="sep"></i>
          <div class="combo lwt"><i class="stroke"></i><select aria-label="线宽"><option>ByLayer</option></select>${chevron("M1 3L5 7L9 3")}</div>
          <button class="tool" aria-label="编辑线型">${icon("edit")}</button>
        </div>
      </div>

      <div class="work">
        <aside class="side"><div class="strip"><i class="grip"></i>${tools(DRAW_TOOLS)}</div></aside>
        <main class="center">
          <cad-drawing></cad-drawing>
          <div class="sheets">
            <button class="nav" aria-label="上一个"><svg viewBox="0 0 5 8"><path d="M5 0V8L0 4Z"/></svg></button>
            <button class="nav" aria-label="下一个"><svg viewBox="0 0 5 8"><path d="M0 0V8L5 4Z"/></svg></button>
            <button class="model"><svg viewBox="0 0 50 17"><path d="M2 0L9 15.500H43L50 0" fill="#fff" stroke="#000"/></svg><span>模型</span></button>
          </div>
        </main>
        <aside class="side right"><i class="grip"></i>
          <div class="cols"><div class="col">${tools(DIM_TOOLS)}</div><div class="col">${tools(EDIT_TOOLS)}</div></div>
        </aside>
      </div>

      <section class="command">
        <div class="log">
          <div class="lines"><p> CAD梦想画图:https://www.mxdraw3d.com</p><p>命令:</p><p>命令:</p></div>
          <div class="vscroll">${chevron("M1 7L5 3L9 7")}${chevron("M1 3L5 7L9 3")}</div>
        </div>
        <div class="prompt"><label for="cmd">命令:</label><input id="cmd" />
          <div class="hscroll">${chevron("M7 1L3 5L7 9")}<i></i>${chevron("M3 1L7 5L3 9")}</div>
        </div>
        <div class="mark"><strong>激活 W</strong>转到“设置</div>
      </section>

      <footer class="status">
        <span class="coords">9076.786022,  33145.902814,  0.000000</span>
        <div class="modes"><button class="toggle">栅格</button><button class="toggle">正交</button><button class="toggle">极轴</button></div>
        <button class="toggle wide on">对象捕捉</button><button class="toggle wide on">对象追踪</button>
        <button class="toggle dyn on">DYN</button><button class="toggle on">线宽</button>
        <a href="#feedback">提交软件问题或增加新功能</a>
        <span class="brand">${icon("logo", "i18")}MxCAD</span>
      </footer>

      <div class="callout"></div>
    </div>`;
  }
}
